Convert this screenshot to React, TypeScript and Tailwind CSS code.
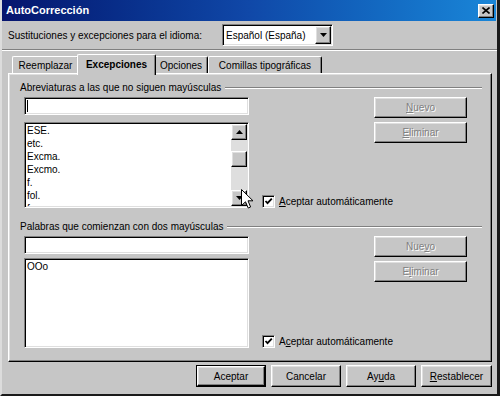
import React from "react";

const raised =
  "border border-t-white border-l-white border-r-black border-b-black shadow-[inset_-1px_-1px_0_#808080,inset_1px_1px_0_#dfdfdf]";
const sunken =
  "border border-t-[#808080] border-l-[#808080] border-r-white border-b-white shadow-[inset_1px_1px_0_#000,inset_-1px_-1px_0_#dfdfdf]";
const disabledText = "text-[#808080] [text-shadow:1px_1px_0_#fff]";

function U({ children }: { children: React.ReactNode }) {
  return <span className="underline underline-offset-[1px]">{children}</span>;
}

function Button({
  children,
  className,
  disabled,
  isDefault,
}: {
  children: React.ReactNode;
  className: string;
  disabled?: boolean;
  isDefault?: boolean;
}) {
  if (isDefault) {
    return (
      <div className={`${className} border border-black`}>
        <div className={`${raised} h-full w-full flex items-center justify-center`}>{children}</div>
      </div>
    );
  }
  return (
    <div
      className={`${className} ${raised} flex items-center justify-center ${disabled ? disabledText : "text-black"}`}
    >
      {children}
    </div>
  );
}

function Check() {
  return (
    <div className={`${sunken} w-[13px] h-[13px] bg-white flex items-center justify-center shrink-0`}>
      <svg width="9" height="9" viewBox="0 0 9 9">
        <path d="M1.5 4 L3.5 6.2 L7.8 1.6" stroke="#000" strokeWidth="1.8" fill="none" />
      </svg>
    </div>
  );
}

function GroupLabel({ text }: { text: string }) {
  return (
    <div className="flex items-center h-[13px] ml-[11px] mr-[9px]">
      <span className="whitespace-nowrap">{text}</span>
      <div className="flex-1 ml-[4px] h-[2px] border-t border-t-[#808080] border-b border-b-white" />
    </div>
  );
}

function ArrowBtn({ down }: { down?: boolean }) {
  return (
    <div className={`${raised} w-[16px] h-[16px] bg-[#c6c6c6] flex items-center justify-center shrink-0`}>
      <svg width="7" height="4" viewBox="0 0 7 4">
        {down ? <path d="M0 0 H7 L3.5 4 Z" fill="#000" /> : <path d="M0 4 H7 L3.5 0 Z" fill="#000" />}
      </svg>
    </div>
  );
}

export default function App() {
  const items = ["ESE.", "etc.", "Excma.", "Excmo.", "f.", "fol.", "fr."];
  return (
    <div className="relative w-[500px] h-[396px] overflow-hidden bg-[#c6c6c6] flex flex-col border-l-2 border-l-[#dcdcdc] border-r-[3px] border-r-[#1a1a1a] border-b-2 border-b-[#1a1a1a] font-['Liberation_Sans',Arial,sans-serif] text-[10px] leading-[13px] text-black">
      {/* Title bar */}
      <div className="h-[21px] shrink-0 flex items-center justify-between bg-linear-to-r from-[#06146e] via-[#1048a8] to-[#1a86d8] mr-[1px]">
        <span className="pl-[4px] text-white font-bold text-[11px]">AutoCorrección</span>
        <div className={`${raised} w-[16px] h-[14px] bg-[#c6c6c6] mr-[2px] flex items-center justify-center`}>
          <svg width="8" height="7" viewBox="0 0 8 7">
            <path d="M0.5 0.5 L7.5 6.5 M7.5 0.5 L0.5 6.5" stroke="#000" strokeWidth="1.6" />
          </svg>
        </div>
      </div>

      {/* Language row */}
      <div className="mt-[3px] h-[22px] flex items-center">
        <div className="w-[220px] pl-[6px]">Sustituciones y excepciones para el idioma:</div>
        <div className={`${sunken} w-[111px] h-[22px] bg-white p-[1px] flex items-center justify-between`}>
          <span className="pl-[2px]">Español (España)</span>
          <div className={`${raised} w-[16px] h-[18px] bg-[#c6c6c6] flex items-center justify-center`}>
            <svg width="7" height="4" viewBox="0 0 7 4">
              <path d="M0 0 H7 L3.5 4 Z" fill="#000" />
            </svg>
          </div>
        </div>
      </div>

      {/* Separator */}
      <div className="mt-[3px] h-[2px] border-t border-t-[#808080] border-b border-b-white" />

      {/* Tabs */}
      <div className="relative z-10 h-[22px] flex items-end ml-[8px] pl-[2px]">
        <div className="relative z-0 w-[67px] h-[17px] border-t border-l border-t-white border-l-white border-r border-r-black shadow-[inset_-1px_0_0_#808080] rounded-t-[2px] flex items-center justify-center">
          Reemplazar
        </div>
        <div className="relative z-20 -ml-[2px] -mb-[2px] w-[79px] h-[21px] bg-[#c6c6c6] border-t border-l border-t-white border-l-white border-r border-r-black shadow-[inset_-1px_0_0_#808080] rounded-t-[2px] flex items-start pt-[3px] justify-center font-bold">
          Excepciones
        </div>
        <div className="relative z-0 -ml-[2px] w-[54px] h-[17px] border-t border-l border-t-white border-l-white border-r border-r-black shadow-[inset_-1px_0_0_#808080] rounded-t-[2px] flex items-center justify-center">
          Opciones
        </div>
        <div className="relative z-0 w-[114px] h-[17px] border-t border-l border-t-white border-l-white border-r border-r-black shadow-[inset_-1px_0_0_#808080] rounded-t-[2px] flex items-center justify-center">
          Comillas tipográficas
        </div>
      </div>

      {/* Panel */}
      <div className={`${raised} ml-[6px] w-[484px] h-[289px] shrink-0 flex flex-col`}>
        <div className="mt-[7px]">
          <GroupLabel text="Abreviaturas a las que no siguen mayúsculas" />
        </div>
        <div className="mt-[3px] flex">
          <div className="ml-[15px] w-[225px] shrink-0 flex flex-col">
            <div className={`${sunken} h-[18px] bg-white p-[1px] flex items-center`}>
              <div className="ml-[1px] w-[1px] h-[12px] bg-black" />
            </div>
            <div className={`${sunken} mt-[7px] h-[86px] bg-white p-[1px] flex`}>
              <div className="flex-1 overflow-hidden">
                {items.map((t) => (
                  <div key={t} className="h-[13px] pl-[1px]">
                    {t}
                  </div>
                ))}
              </div>
              <div className="w-[16px] flex flex-col">
                <ArrowBtn />
                <div className="flex-1 bg-[#dedede] flex flex-col">
                  <div className="h-[11px]" />
                  <div className={`${raised} h-[16px] bg-[#c6c6c6]`} />
                </div>
                <ArrowBtn down />
              </div>
            </div>
          </div>
          <div className="flex-1 min-w-0 flex items-end pl-[13px]">
            <div className="flex items-center gap-[4px] h-[13px] whitespace-nowrap">
              <Check />
              <span>
                <U>A</U>ceptar automáticamente
              </span>
            </div>
          </div>
          <div className="w-[93px] shrink-0 mr-[24px] flex flex-col gap-[4px]">
            <Button className="h-[21px]" disabled>
              <span>
                <U>N</U>uevo
              </span>
            </Button>
            <Button className="h-[21px]" disabled>
              <span>
                <U>E</U>liminar
              </span>
            </Button>
          </div>
        </div>

        <div className="mt-[12px]">
          <GroupLabel text="Palabras que comienzan con dos mayúsculas" />
        </div>
        <div className="mt-[3px] flex">
          <div className="ml-[15px] w-[225px] shrink-0 flex flex-col">
            <div className={`${sunken} h-[18px] bg-white`} />
            <div className={`${sunken} mt-[4px] h-[90px] bg-white p-[1px]`}>
              <div className="h-[13px] pl-[1px]">OOo</div>
            </div>
          </div>
          <div className="flex-1 min-w-0 flex items-end pl-[13px]">
            <div className="flex items-center gap-[4px] h-[13px] whitespace-nowrap">
              <Check />
              <span>
                A<U>c</U>eptar automáticamente
              </span>
            </div>
          </div>
          <div className="w-[93px] shrink-0 mr-[24px] flex flex-col gap-[4px]">
            <Button className="h-[21px]" disabled>
              <span>
                Nue<U>v</U>o
              </span>
            </Button>
            <Button className="h-[21px]" disabled>
              <span>
                E<U>l</U>iminar
              </span>
            </Button>
          </div>
        </div>
      </div>

      {/* Bottom buttons */}
      <div className="mt-[3px] flex justify-end gap-[5px] mr-[5px]">
        <Button className="w-[70px] h-[22px]" isDefault>
          Aceptar
        </Button>
        <Button className="w-[70px] h-[22px]">Cancelar</Button>
        <Button className="w-[70px] h-[22px]">
          <span>
            Ay<U>u</U>da
          </span>
        </Button>
        <Button className="w-[71px] h-[22px]">
          <span>
            <U>R</U>establecer
          </span>
        </Button>
      </div>

      {/* Mouse cursor */}
      <svg className="absolute left-[239px] top-[189px]" width="13" height="20" viewBox="0 0 13 20">
        <path
          d="M0.5 0.5 L0.5 16.5 L4.5 12.8 L7.2 19 L9.6 18 L7 11.8 L12 11.8 Z"
          fill="#fff"
          stroke="#000"
          strokeWidth="1"
        />
      </svg>
    </div>
  );
}
